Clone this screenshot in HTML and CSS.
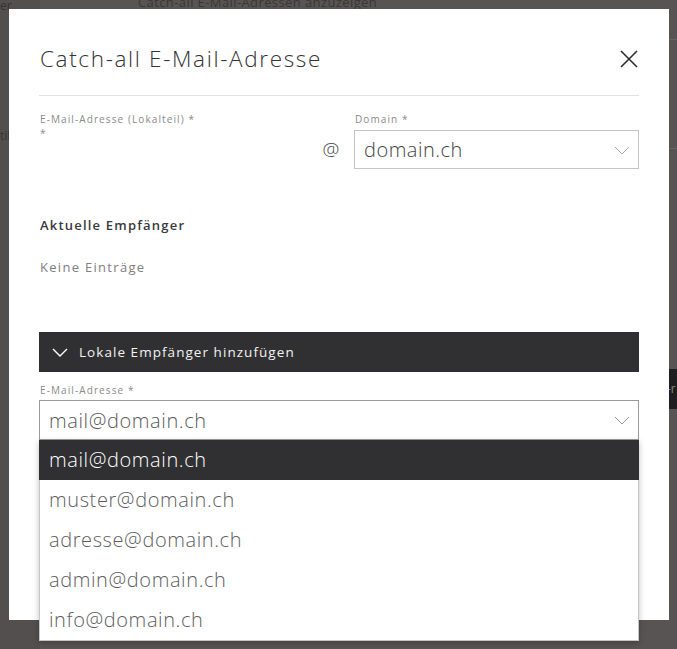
FILE: index.html
```html
<!DOCTYPE html>
<html lang="de">
<head>
<meta charset="utf-8">
<title>Catch-all E-Mail-Adresse</title>
<link rel="stylesheet" href="styles.css">
</head>
<body>
<div class="page">
  <div class="page-side">
    <div class="side-text">er</div>
    <div class="side-text side-text--mid">til</div>
  </div>
  <div class="page-main">
    <div class="page-top">Catch-all E-Mail-Adressen anzuzeigen</div>
  </div>
  <div class="page-right">
    <div class="right-row"></div>
    <div class="right-row right-row--tall"></div>
    <div class="right-text r1">e</div>
    <div class="right-text r2">c</div>
    <div class="right-text r3">o</div>
    <div class="right-btn">-r</div>
  </div>
</div>

<div class="modal">
  <div class="modal-header">
    <h1 class="modal-title">Catch-all E-Mail-Adresse</h1>
    <svg class="close" width="18" height="18" viewBox="0 0 18 18"><path d="M1 1 L17 17 M17 1 L1 17" stroke="#2d2d2f" stroke-width="1.6" fill="none"/></svg>
  </div>

  <div class="field-row">
    <div class="field">
      <div class="label">E-Mail-Adresse (Lokalteil) *</div>
      <div class="label">*</div>
    </div>
    <div class="at">@</div>
    <div class="field">
      <div class="label">Domain *</div>
      <div class="select">
        <span class="select-value">domain.ch</span>
        <svg class="chev" width="16" height="9" viewBox="0 0 16 9"><path d="M1 1 L8 8 L15 1" stroke="#aaa" stroke-width="1" fill="none"/></svg>
      </div>
    </div>
  </div>

  <h2 class="section-title">Aktuelle Empfänger</h2>
  <p class="empty">Keine Einträge</p>

  <div class="accordion">
    <svg class="acc-chev" width="16" height="9" viewBox="0 0 16 9"><path d="M1 1 L8 8 L15 1" stroke="#fff" stroke-width="1.4" fill="none"/></svg>
    <span>Lokale Empfänger hinzufügen</span>
  </div>

  <div class="label label--email">E-Mail-Adresse *</div>
  <div class="select select--open">
    <span class="select-value">mail@domain.ch</span>
    <svg class="chev" width="16" height="9" viewBox="0 0 16 9"><path d="M1 1 L8 8 L15 1" stroke="#999" stroke-width="1" fill="none"/></svg>
  </div>
  <ul class="options">
    <li class="option option--active">mail@domain.ch</li>
    <li class="option">muster@domain.ch</li>
    <li class="option">adresse@domain.ch</li>
    <li class="option">admin@domain.ch</li>
    <li class="option">info@domain.ch</li>
  </ul>
</div>
</body>
</html>
```

FILE: styles.css
```css
* { box-sizing: border-box; }
html, body {
  margin: 0;
  padding: 0;
  width: 677px;
  height: 649px;
  overflow: hidden;
  background: #585453;
  font-family: "Open Sans", "Liberation Sans", sans-serif;
}

/* dimmed page behind the dialog */
.page {
  display: flex;
  height: 649px;
}
.page-side {
  width: 40px;
  background: #534f4e;
  color: #363333;
  font-size: 12px;
}
.side-text {
  line-height: 12px;
  margin-top: 0;
}
.side-text--mid { margin-top: 118px; }
.page-main {
  flex: 1;
  padding-left: 98px;
}
.page-top {
  margin-top: -6px;
  font-size: 13px;
  line-height: 16px;
  color: #3a3737;
  letter-spacing: 0.4px;
}
.page-right {
  width: 140px;
  margin-right: -130px;
  display: flex;
  flex-direction: column;
  color: #3a3737;
  font-size: 13px;
}
.right-row {
  height: 40px;
  border-bottom: 1px solid #676362;
}
.right-row--tall { height: 109px; }
.right-text { line-height: 16px; margin-left: 10px; }
.r1 { margin-top: 84px; }
.r2 { margin-top: 16px; }
.r3 { margin-top: 4px; }
.right-btn {
  margin-top: 68px;
  height: 40px;
  background: #1f1e20;
  color: #8a8788;
  line-height: 40px;
  font-size: 12px;
}

/* dialog */
.modal {
  position: absolute;
  left: 9px;
  top: 9px;
  width: 660px;
  height: 611px;
  background: #fff;
  padding: 0 30px 0 30px;
}
.modal-header {
  display: flex;
  justify-content: space-between;
  align-items: center;
  height: 87px;
  padding-top: 14px;
  border-bottom: 1px solid #e2e2e2;
}
.modal-title {
  margin: 0;
  font-size: 22.5px;
  line-height: 28px;
  font-weight: 300;
  color: #333336;
  letter-spacing: 1.65px;
  padding-left: 1px;
}
.close { margin-right: 1px; }

.field-row {
  display: grid;
  grid-template-columns: 1fr 44px 285px;
  margin-top: 16px;
}
.label {
  font-size: 10px;
  line-height: 14px;
  color: #8a8a8a;
  letter-spacing: 1.1px;
  padding-left: 1px;
}
.at {
  align-self: end;
  text-align: center;
  font-size: 19px;
  font-weight: 300;
  line-height: 39px;
  color: #444;
  padding-right: 2px;
}
.select {
  margin-top: 4px;
  height: 39px;
  border: 1px solid #c4c4c4;
  display: flex;
  align-items: center;
  justify-content: space-between;
  padding: 0 8px 0 9px;
}
.select-value {
  font-size: 20px;
  color: #444;
  font-weight: 300;
  letter-spacing: 0.5px;
}
.chev { margin-top: 1px; }

.section-title {
  margin: 47px 0 0;
  font-size: 13px;
  line-height: 18px;
  font-weight: 600;
  color: #3a3a3c;
  letter-spacing: 1.2px;
  padding-left: 1px;
}
.empty {
  margin: 24px 0 0;
  font-size: 13px;
  line-height: 18px;
  color: #808080;
  letter-spacing: 1.3px;
  padding-left: 1px;
}
.accordion {
  margin-top: 56px;
  height: 40px;
  background: #303033;
  display: flex;
  align-items: center;
  gap: 11px;
  padding-left: 13px;
  color: #f2f2f2;
  font-size: 13.5px;
  letter-spacing: 1.05px;
}
.label--email {
  margin-top: 11px;
}
.select--open {
  margin-top: 3px;
  height: 40px;
  border-color: #9a9a9a;
  padding: 0 8px 0 9px;
}
.select--open .select-value { color: #5a5a5a; letter-spacing: 0.6px; }
.options {
  margin: 0;
  padding: 0;
  list-style: none;
  background: #fff;
  border: 1px solid #c6c6c6;
  border-top: none;
  box-shadow: 0 2px 6px rgba(0, 0, 0, 0.25);
}
.option {
  height: 40px;
  line-height: 40px;
  padding-left: 9px;
  font-size: 20px;
  font-weight: 300;
  color: #5e5e5e;
  letter-spacing: 0.6px;
}
.option--active {
  background: #303033;
  color: #fff;
  margin: 0 -1px;
  padding-left: 10px;
}
```
